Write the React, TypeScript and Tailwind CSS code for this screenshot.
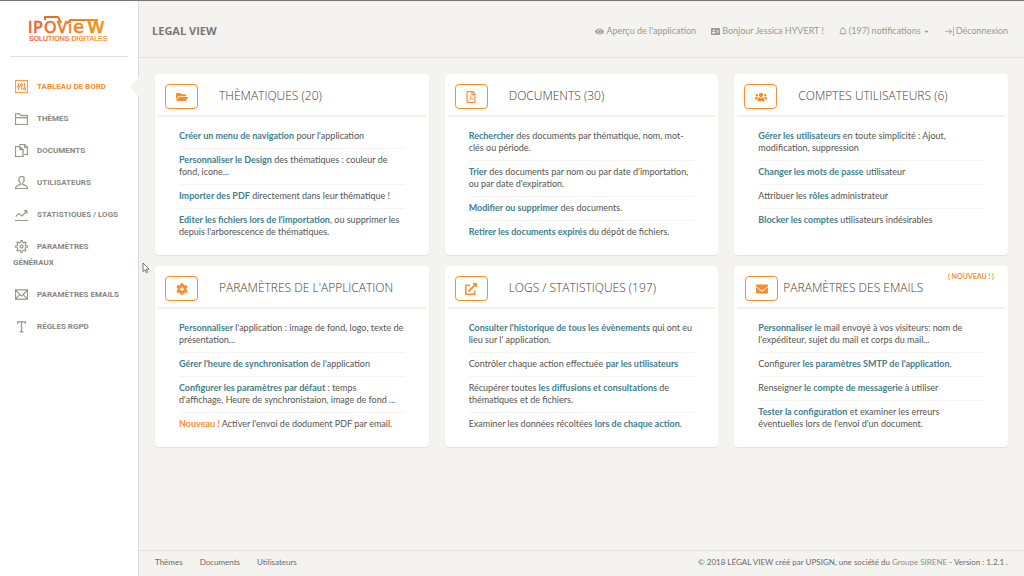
import React from 'react';
import { FaEye, FaAddressCard, FaFolderOpen, FaRegFilePdf, FaUsers, FaCog, FaExternalLinkAlt, FaEnvelope, FaCaretDown } from 'react-icons/fa';
import { TfiPanel, TfiFolder, TfiFiles, TfiUser, TfiStatsUp, TfiSettings, TfiEmail, TfiText, TfiBell, TfiShiftRight } from 'react-icons/tfi';
import type { IconType } from 'react-icons';

const menu: { label: string; icon: IconType; active?: boolean }[] = [
  { label: 'TABLEAU DE BORD', icon: TfiPanel, active: true },
  { label: 'THÈMES', icon: TfiFolder },
  { label: 'DOCUMENTS', icon: TfiFiles },
  { label: 'UTILISATEURS', icon: TfiUser },
  { label: 'STATISTIQUES / LOGS', icon: TfiStatsUp },
  { label: 'PARAMÈTRES GÉNÉRAUX', icon: TfiSettings },
  { label: 'PARAMÈTRES EMAILS', icon: TfiEmail },
  { label: 'RÉGLES RGPD', icon: TfiText },
];

// Link text inside the card lists
const B = ({ children }: { children: React.ReactNode }) => (
  <a href="#" className="font-bold text-[#42808c]">{children}</a>
);

type CardData = {
  title: string;
  icon: IconType;
  isNew?: boolean;
  items: React.ReactNode[];
};

const cards: CardData[] = [
  {
    title: 'THÈMATIQUES (20)',
    icon: FaFolderOpen,
    items: [
      <><B>Créer un menu de navigation</B> pour l'application</>,
      <><B>Personnaliser le Design</B> des thématiques : couleur de fond, icone...</>,
      <><B>Importer des PDF</B> directement dans leur thématique !</>,
      <><B>Editer les fichiers lors de l'importation</B>, ou supprimer les depuis l'arborescence de thématiques.</>,
    ],
  },
  {
    title: 'DOCUMENTS (30)',
    icon: FaRegFilePdf,
    items: [
      <><B>Rechercher</B> des documents par thématique, nom, mot-clés ou période.</>,
      <><B>Trier</B> des documents par nom ou par date d'importation, ou par date d'expiration.</>,
      <><B>Modifier ou supprimer</B> des documents.</>,
      <><B>Retirer les documents expirés</B> du dépôt de fichiers.</>,
    ],
  },
  {
    title: 'COMPTES UTILISATEURS (6)',
    icon: FaUsers,
    items: [
      <><B>Gérer les utilisateurs</B> en toute simplicité : Ajout, modification, suppression</>,
      <><B>Changer les mots de passe</B> utilisateur</>,
      <>Attribuer les <B>rôles</B> administrateur</>,
      <><B>Blocker les comptes</B> utilisateurs indésirables</>,
    ],
  },
  {
    title: "PARAMÈTRES DE L'APPLICATION",
    icon: FaCog,
    items: [
      <><B>Personnaliser</B> l'application : image de fond, logo, texte de présentation...</>,
      <><B>Gérer l'heure de synchronisation</B> de l'application</>,
      <><B>Configurer les paramètres par défaut</B> : temps<br />d'affichage, Heure de synchronistaion, image de fond ...</>,
      <><span className="font-bold text-[#fb8c2b]">Nouveau !</span> Activer l'envoi de dodument PDF par email.</>,
    ],
  },
  {
    title: 'LOGS / STATISTIQUES (197)',
    icon: FaExternalLinkAlt,
    items: [
      <><B>Consulter l'historique de tous les évènements</B> qui ont eu lieu sur l' application.</>,
      <>Contrôler chaque action effectuée <B>par les utilisateurs</B></>,
      <>Récupérer toutes <B>les diffusions et consultations</B> de thématiques et de fichiers.</>,
      <>Examiner les données récoltées <B>lors de chaque action</B>.</>,
    ],
  },
  {
    title: 'PARAMÈTRES DES EMAILS',
    icon: FaEnvelope,
    isNew: true,
    items: [
      <><B>Personnaliser</B> le mail envoyé à vos visiteurs: nom de l'expéditeur, sujet du mail et corps du mail...</>,
      <>Configurer <B>les paramètres SMTP de l'application</B>.</>,
      <>Renseigner <B>le compte de messagerie</B> à utiliser</>,
      <><B>Tester la configuration</B> et examiner les erreurs éventuelles lors de l'envoi d'un document.</>,
    ],
  },
];

const Logo = () => (
  <svg viewBox="0 -6 84 40" className="h-10 w-[84px]" role="img" aria-label="IPOView Solutions Digitales">
    <defs>
      <linearGradient id="logo" gradientUnits="userSpaceOnUse" x1="0" y1="0" x2="84" y2="0">
        <stop offset="0" stopColor="#ea5b25" />
        <stop offset="0.6" stopColor="#f08019" />
        <stop offset="1" stopColor="#f39c12" />
      </linearGradient>
    </defs>
    <g fill="url(#logo)" stroke="url(#logo)" strokeWidth="0.5" fontFamily="DejaVu Sans, sans-serif" fontSize="15">
      <text x="1" y="18">I</text>
      <text x="6" y="18" fontSize="16">P</text>
      <text x="17" y="18" fontSize="16">O</text>
      <text x="30" y="18">V</text>
      <text x="41" y="18">i</text>
      <text x="46" y="18" fontSize="18">e</text>
      <text x="60" y="18" fontSize="22">w</text>
    </g>
    <path d="M18 5V2H31L34 8M40 9L43 5H71" fill="none" stroke="url(#logo)" strokeWidth="2" strokeLinejoin="round" />
    <text x="2" y="26" fill="url(#logo)" stroke="url(#logo)" strokeWidth="0.2" fontFamily="Liberation Sans, sans-serif" fontSize="7">SOLUTIONS DIGITALES</text>
  </svg>
);

const Sidebar = () => (
  <aside className="w-[139px] shrink-0 border-r border-[#dddcd8] bg-white">
    <div className="mx-2.5 flex h-14 items-center justify-center border-b border-[#dddddd]">
      <a href="#"><Logo /></a>
    </div>
    <nav className="mt-[22px] flex flex-col gap-4 font-['Roboto',sans-serif] text-[8px] leading-4 font-bold text-[#8a8783]">
      {menu.map(({ label, icon: Icon, active }) => (
        <a key={label} href="#" className={active ? 'relative block px-[13px] text-[#fb8c2b]' : 'block px-[13px]'}>
          <Icon className="mr-[9px] ml-0.5 inline-block size-[13px] stroke-[0.4] align-middle" />
          {label}
          {active && (
            <svg viewBox="0 0 9 20" className="absolute -top-0.5 right-[-1px] h-5 w-[9px]">
              <path d="M9 0L0 10L9 20Z" fill="#f4f3ef" />
            </svg>
          )}
        </a>
      ))}
    </nav>
  </aside>
);

const Header = () => (
  <header className="flex h-[57px] items-center justify-between border-b border-[#e3e1dc] pt-1 pr-4 pl-[13px]">
    <h1 className="font-['Open_Sans',sans-serif] text-[11px] font-bold text-[#7a7875]">LEGAL VIEW</h1>
    <div className="flex items-center gap-[15px] text-[#9a9894]">
      <a href="#" className="flex items-center gap-0.5"><FaEye className="size-[9px]" />Aperçu de l'application</a>
      <a href="#" className="flex items-center gap-0.5"><FaAddressCard className="size-[9px]" />Bonjour Jessica HYVERT !</a>
      <button type="button" className="flex items-center gap-0.5">
        <TfiBell className="size-2 stroke-[0.4]" />(197) notifications<FaCaretDown className="size-[7px]" />
      </button>
      <a href="#" className="flex items-center gap-0.5"><TfiShiftRight className="size-[9px] stroke-[0.4]" />Déconnexion</a>
    </div>
  </header>
);

const Card = ({ title, icon: Icon, isNew, items }: CardData) => (
  <section className="relative rounded bg-white px-[3px] pb-[11px] shadow-[0_1px_1px_#e4e2dd]">
    <div className={isNew ? 'flex h-[43px] items-center gap-[5px] border-b-2 border-[#f1f0ee] pt-1 pl-2' : 'flex h-[43px] items-center gap-[21px] border-b-2 border-[#f1f0ee] pt-1 pl-[7px]'}>
      <a href="#" aria-label={title} className="flex h-[25px] w-[33px] items-center justify-center rounded-sm border border-[#fb8c2b] text-[#fb8c2b]">
        <Icon className="size-3" />
      </a>
      <h2 className="pb-0.5 font-['Open_Sans',sans-serif] text-[12px] leading-4 font-light text-[#3e3c39]">{title}</h2>
    </div>
    {isNew && <span className="absolute top-1 right-3.5 text-[7px] leading-3 font-bold text-[#fb8c2b]">( NOUVEAU ! )</span>}
    <ul className="mt-[13px] px-[21px] leading-3 text-[#55534f]">
      {items.map((item, i) => (
        <li key={i} className="mb-[5px] border-b border-[#f4f3ef] pb-1.5 last:mb-0 last:border-0">{item}</li>
      ))}
    </ul>
  </section>
);

const Footer = () => (
  <footer className="flex h-[26px] items-center justify-between border-t border-[#e3e1dc] px-4 pb-1 text-[8px] text-[#6b6966]">
    <nav className="flex gap-[17px]">
      <a href="#">Thèmes</a>
      <a href="#">Documents</a>
      <a href="#">Utilisateurs</a>
    </nav>
    <p>© 2018 LÉGAL VIEW créé par UPSIGN, une société du <a href="#" className="text-[#8f8d89]">Groupe SIRENE</a> - Version : 1.2.1 .</p>
  </footer>
);

const App = () => (
  <div className="relative flex min-h-screen border-t border-[#77757a] bg-[#f4f3ef] font-['Lato',sans-serif] text-[9px]">
    <Sidebar />
    <div className="flex min-w-0 flex-1 flex-col">
      <Header />
      <main className="flex-1 px-4 pt-4">
        <div className="grid grid-cols-3 gap-x-4 gap-y-[11px]">
          {cards.map((card) => <Card key={card.title} {...card} />)}
        </div>
      </main>
      <Footer />
    </div>
    {/* Mouse pointer */}
    <svg viewBox="0 0 8 12" className="absolute top-[261px] left-[142px] h-3 w-2">
      <path d="M1 1V9.5L3 7.7L4.4 10.8L5.6 10.2L4.3 7.2H7Z" fill="#fff" stroke="#55535a" strokeWidth="0.8" />
    </svg>
  </div>
);

export default App;
